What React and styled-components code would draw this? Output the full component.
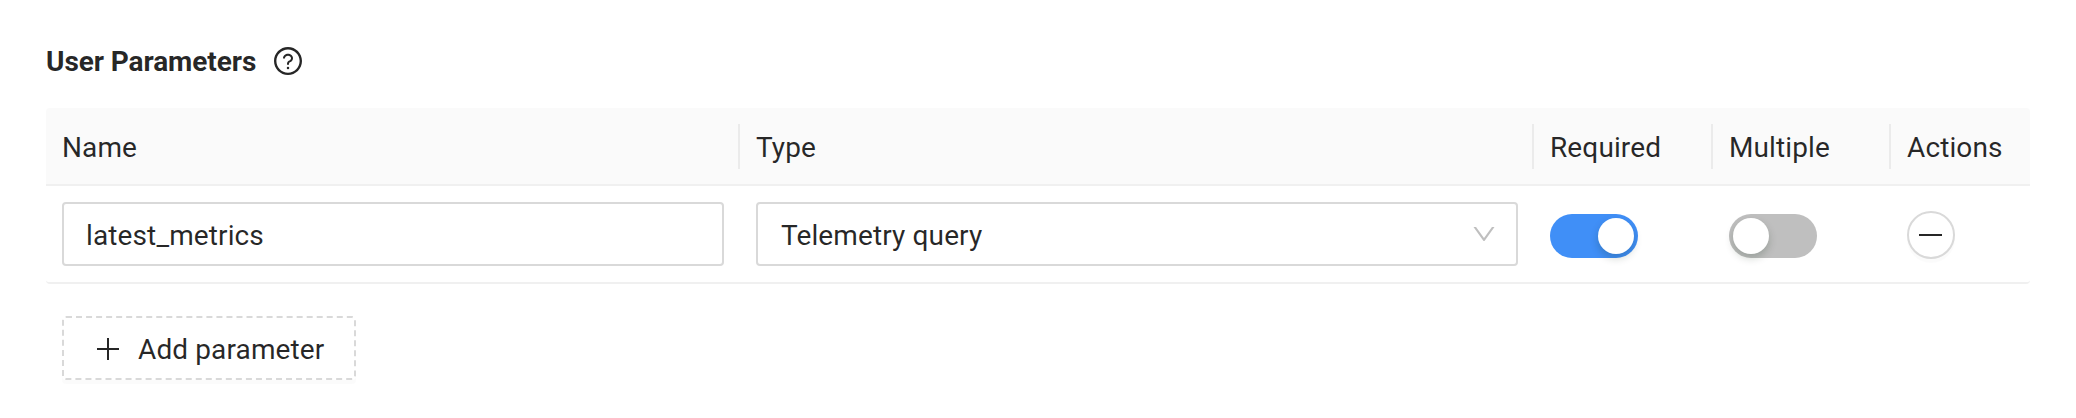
import React, { useState } from "react";
import styled, { createGlobalStyle } from "styled-components";

const GlobalStyle = createGlobalStyle`
  *, *::before, *::after { box-sizing: border-box; }
  body {
    margin: 0;
    background: #fff;
    color: rgba(0, 0, 0, 0.85);
    font-family: Roboto, "Liberation Sans", sans-serif;
    font-size: 28px;
    line-height: 44px;
    letter-spacing: 0.12px;
    -webkit-font-smoothing: antialiased;
  }
`;

const Page = styled.main`
  padding: 39px 46px 0;
`;

const Heading = styled.header`
  display: flex;
  align-items: center;
  gap: 16px;
  height: 44px;
  margin-bottom: 25px;
`;

const Title = styled.h2`
  margin: 0;
  padding-top: 2px;
  font-size: 28px;
  font-weight: 700;
  line-height: 44px;
  letter-spacing: -0.08px;
`;

const Label = styled.span`
  display: block;
  padding-top: 4px;
`;

const Icon = styled.svg`
  display: block;
  flex: none;
  width: ${(p) => p.$size}px;
  height: ${(p) => p.$size}px;
  fill: currentColor;
`;

const Row = styled.div`
  display: grid;
  grid-template-columns: 694px 794px 179px 178px 139px;
  border-bottom: 2px solid #f0f0f0;
`;

const HeadRow = styled(Row)`
  height: 78px;
  background: #fafafa;
  border-radius: 4px 4px 0 0;
`;

const BodyRow = styled(Row)`
  height: 98px;
  border-radius: 0 0 4px 4px;
`;

const HeadCell = styled.div`
  display: flex;
  align-items: center;
  justify-content: space-between;
  padding-left: 16px;

  &:not(:last-child)::after {
    content: "";
    width: 2px;
    height: 45px;
    background: rgba(0, 0, 0, 0.06);
  }
`;

const Cell = styled.div`
  display: flex;
  align-items: center;
  padding: 0 16px;
`;

const Input = styled.input`
  width: 100%;
  height: 64px;
  padding: 3px 22px 0;
  border: 2px solid #d9d9d9;
  border-radius: 4px;
  background: #fff;
  color: inherit;
  font: inherit;
  letter-spacing: inherit;
  outline: none;
`;

const Select = styled.div`
  display: flex;
  align-items: center;
  justify-content: space-between;
  width: 100%;
  height: 64px;
  padding: 0 18px 0 23px;
  border: 2px solid #d9d9d9;
  border-radius: 4px;
`;

const Arrow = styled(Icon)`
  color: rgba(0, 0, 0, 0.25);
`;

const Switch = styled.button`
  display: flex;
  justify-content: ${(p) => (p.$on ? "flex-end" : "flex-start")};
  width: 88px;
  height: 44px;
  margin-top: 4px;
  padding: 4px;
  border: 0;
  border-radius: 22px;
  background: ${(p) => (p.$on ? "#408ff7" : "#bfbfbf")};
`;

const Handle = styled.span`
  width: 36px;
  height: 36px;
  border-radius: 50%;
  background: #fff;
  box-shadow: 0 4px 8px rgba(0, 35, 11, 0.2);
`;

const RoundButton = styled.button`
  display: flex;
  align-items: center;
  justify-content: center;
  width: 48px;
  height: 48px;
  margin-top: 2px;
  padding: 0;
  border: 2px solid #d9d9d9;
  border-radius: 50%;
  background: #fff;
  color: inherit;
  box-shadow: 0 4px 0 rgba(0, 0, 0, 0.016);
`;

const Footer = styled.div`
  padding: 32px 16px;
`;

const AddButton = styled.button`
  display: flex;
  align-items: center;
  gap: 14px;
  width: 294px;
  height: 64px;
  padding: 0 0 0 28px;
  border: 2px dashed #d9d9d9;
  border-radius: 4px;
  background: #fff;
  color: inherit;
  font: inherit;
  letter-spacing: inherit;
  box-shadow: 0 4px 0 rgba(0, 0, 0, 0.016);
`;

function Toggle({ initial, label }) {
  const [on, setOn] = useState(initial);
  return (
    <Switch $on={on} role="switch" aria-checked={on} aria-label={label} onClick={() => setOn(!on)}>
      <Handle />
    </Switch>
  );
}

const columns = ["Name", "Type", "Required", "Multiple", "Actions"];

export default function App() {
  const [name, setName] = useState("latest_metrics");
  return (
    <>
      <GlobalStyle />
      <Page>
        <Heading>
          <Title>User Parameters</Title>
          <Icon $size={32} viewBox="0 0 1024 1024">
            <path d="M512 64C264.6 64 64 264.6 64 512s200.6 448 448 448 448-200.6 448-448S759.4 64 512 64zm0 820c-205.4 0-372-166.6-372-372s166.6-372 372-372 372 166.6 372 372-166.6 372-372 372z" />
            <path d="M623.6 316.7C593.6 290.4 554 276 512 276s-81.6 14.5-111.6 40.7C369.2 344 352 380.7 352 420v7.6c0 4.4 3.6 8 8 8h48c4.4 0 8-3.6 8-8V420c0-44.1 43.1-80 96-80s96 35.9 96 80c0 31.1-22 59.6-56.1 72.7-21.2 8.1-39.2 22.3-52.1 40.9-13.1 19-19.9 41.8-19.9 64.9V620c0 4.4 3.6 8 8 8h48c4.4 0 8-3.6 8-8v-22.7a48.3 48.3 0 0 1 30.9-44.8c59-22.7 97.1-74.7 97.1-132.5.1-39.3-17.1-76-48.3-103.3zM472 732a40 40 0 1 0 80 0 40 40 0 1 0-80 0z" />
          </Icon>
        </Heading>
        <HeadRow>
          {columns.map((c) => (
            <HeadCell key={c}>
              <Label>{c}</Label>
            </HeadCell>
          ))}
        </HeadRow>
        <BodyRow>
          <Cell>
            <Input value={name} aria-label="Name" onChange={(e) => setName(e.target.value)} />
          </Cell>
          <Cell>
            <Select>
              <Label>Telemetry query</Label>
              <Arrow $size={28} viewBox="0 0 1024 1024">
                <path d="M884 256h-75c-5.1 0-9.9 2.5-12.9 6.6L512 654.2 227.9 262.6c-3-4.1-7.8-6.6-12.9-6.6h-75c-6.5 0-10.3 7.4-6.5 12.7l352.6 486.1c12.8 17.6 39 17.6 51.7 0l352.6-486.1c3.9-5.3.1-12.7-6.4-12.7z" />
              </Arrow>
            </Select>
          </Cell>
          <Cell>
            <Toggle initial label="Required" />
          </Cell>
          <Cell>
            <Toggle initial={false} label="Multiple" />
          </Cell>
          <Cell>
            <RoundButton aria-label="Remove">
              <Icon $size={32} viewBox="0 0 32 32">
                <path d="M4 15h23v2H4z" />
              </Icon>
            </RoundButton>
          </Cell>
        </BodyRow>
        <Footer>
          <AddButton>
            <Icon $size={32} viewBox="0 0 32 32">
              <path d="M5 16h22v2H5zM15 6h2v22h-2z" />
            </Icon>
            <Label>Add parameter</Label>
          </AddButton>
        </Footer>
      </Page>
    </>
  );
}
